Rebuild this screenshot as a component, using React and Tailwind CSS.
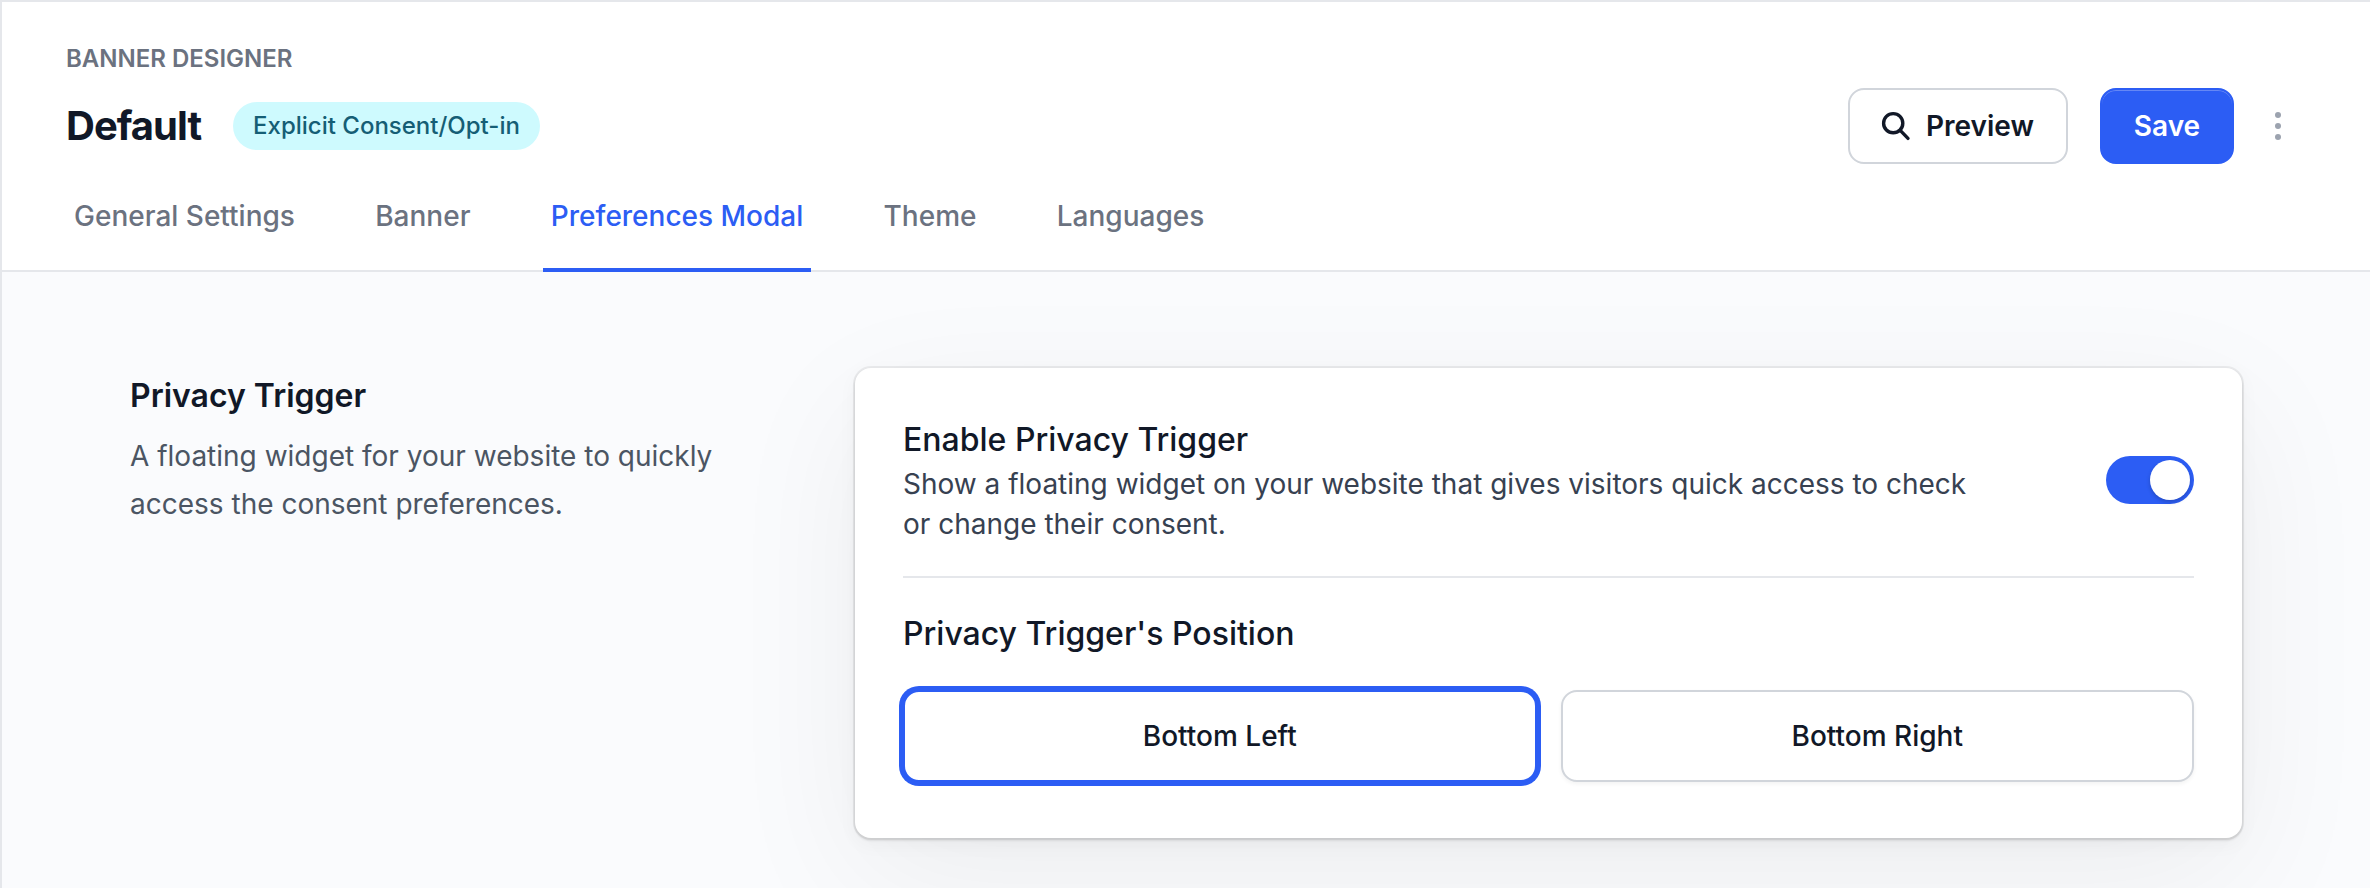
const tabs = ["General Settings", "Banner", "Preferences Modal", "Theme", "Languages"];

function Tab({ label, active }) {
  return (
    <button
      className={
        active
          ? "relative h-full px-2 pb-[34px] text-[28px] leading-10 font-medium text-[#2c5df4] whitespace-nowrap after:absolute after:inset-x-0 after:-bottom-0.5 after:h-1 after:bg-[#2c5df4]"
          : "h-full px-2 pb-[34px] text-[28px] leading-10 font-medium text-[#6b7280] whitespace-nowrap"
      }
    >
      {label}
    </button>
  );
}

function PositionOption({ label, selected }) {
  return (
    <button
      className={
        selected
          ? "flex h-[92px] items-center justify-center rounded-2xl border-2 border-[#2c5df4] bg-white text-[28px] font-medium text-[#111827] ring-4 ring-[#2c5df4]"
          : "flex h-[92px] items-center justify-center rounded-2xl border-2 border-[#d1d5db] bg-white text-[28px] font-medium text-[#111827] shadow-[0_2px_4px_rgba(0,0,0,0.05)]"
      }
    >
      {label}
    </button>
  );
}

export default function App() {
  return (
    <div className="flex h-[888px] w-[2370px] flex-col overflow-hidden border-t-2 border-l-2 border-[#e5e7eb] bg-[#fafbfd] font-['Inter',sans-serif] text-[#111827] antialiased">
      <header className="flex h-[270px] shrink-0 flex-col border-b-2 border-[#e5e7eb] bg-white pr-[88px] pl-16">
        <div className="pt-[41px] text-2xl leading-8 font-semibold text-[#6b7280]">BANNER DESIGNER</div>
        <div className="mt-[13px] flex h-[76px] items-center">
          <h1 className="text-[40px] leading-[56px] font-bold tracking-tight">Default</h1>
          <span className="ml-8 flex h-12 items-center rounded-full bg-[#cefafe] px-5 text-2xl font-medium text-[#155e75]">
            Explicit Consent/Opt-in
          </span>
          <div className="ml-auto flex items-center">
            <button className="flex h-[76px] w-[220px] items-center rounded-2xl border-2 border-[#d1d5db] bg-white pl-8 text-[28px] font-semibold">
              <svg className="mb-px h-7 w-7 overflow-visible" viewBox="0 0 28 28" fill="none" stroke="currentColor" strokeWidth="3.4" strokeLinecap="round">
                <circle cx="11.2" cy="11.2" r="9.6" />
                <path d="M18.2 18.4 26 26.4" />
              </svg>
              <span className="ml-4">Preview</span>
            </button>
            <button className="ml-8 flex h-[76px] w-[134px] items-center justify-center rounded-2xl border-2 border-[#2c5df4] bg-[#2c5df4] text-[28px] font-semibold text-white shadow-[inset_0_1px_0_0_#6587f5]">
              Save
            </button>
            <svg className="ml-10 h-10 w-2" viewBox="0 0 8 40" fill="#9ca3af">
              <circle cx="4" cy="9" r="3" />
              <circle cx="4" cy="20" r="3" />
              <circle cx="4" cy="31" r="3" />
            </svg>
          </div>
        </div>
        <nav className="mt-auto flex gap-[64.3px]">
          {tabs.map((t) => (
            <Tab key={t} label={t} active={t === "Preferences Modal"} />
          ))}
        </nav>
      </header>
      <main className="flex grow items-start pt-24 pl-32">
        <section className="w-[725px] shrink-0 pt-1">
          <h2 className="text-[32px] leading-[48px] font-semibold">Privacy Trigger</h2>
          <p className="mt-3 w-[600px] text-[28px] leading-[48px] text-[#4b5563]">
            A floating widget for your website to quickly access the consent preferences.
          </p>
        </section>
        <section className="h-[470px] w-[1387px] rounded-2xl bg-white px-12 pt-12 shadow-[0_0_0_2px_rgba(0,0,0,0.06),0_2px_2px_1px_rgba(0,0,0,0.08),0_6px_20px_rgba(0,0,0,0.04),0_40px_140px_rgba(0,0,0,0.06)]">
          <div className="flex items-center justify-between border-b-2 border-[#e5e7eb] pb-8">
            <div className="w-[1080px]">
              <h3 className="text-[32px] leading-[48px] font-medium">Enable Privacy Trigger</h3>
              <p className="text-[28px] leading-10 text-[#374151]">
                Show a floating widget on your website that gives visitors quick access to check or change their consent.
              </p>
            </div>
            <div className="flex h-12 w-[88px] items-center justify-end rounded-full bg-[#2c5df4] px-1">
              <div className="h-10 w-10 rounded-full bg-white shadow-[0_2px_4px_rgba(0,0,0,0.2)]" />
            </div>
          </div>
          <h3 className="mt-8 text-[32px] leading-[48px] font-medium">Privacy Trigger's Position</h3>
          <div className="mt-8 grid grid-cols-2 gap-6">
            <PositionOption label="Bottom Left" selected />
            <PositionOption label="Bottom Right" />
          </div>
        </section>
      </main>
    </div>
  );
}
